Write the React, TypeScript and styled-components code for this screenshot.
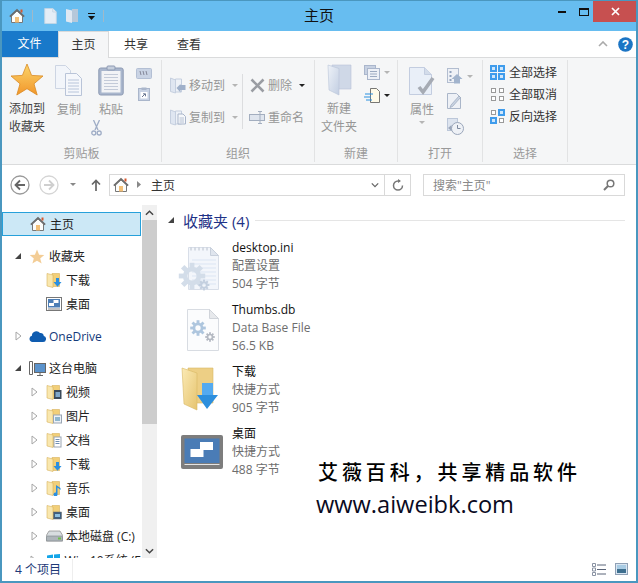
import React from "react";
import styled, { createGlobalStyle } from "styled-components";

const Global = createGlobalStyle`
  html, body { margin: 0; padding: 0; background: #fff; }
  body { font-family: "Open Sans", "Noto Sans CJK SC", "Liberation Sans", sans-serif; font-size: 12px; color: #222; }
  * { box-sizing: border-box; }
  svg { display: block; flex: none; }
`;

const Win = styled.div`
  position: relative; width: 638px; height: 583px; overflow: hidden; display: flex; flex-direction: column;
  background: #fff; border: 1px solid #4a97bf; border-left-width: 2px; border-right-width: 2px; border-bottom-width: 2px;
`;
const TitleBar = styled.div`
  height: 30px; flex: none; margin: 0 -2px 0 -2px; background: #67bdf0; display: flex; align-items: center; padding-left: 9px; position: relative;
`;
const QuickSep = styled.span`width: 1px; height: 12px; background: #9fb9c9; margin: 0 ${p => p.$m ?? 10}px 0 ${p => p.$l ?? 7}px;`;
const QuickGap = styled.span`width: ${p => p.$w}px; flex: none;`;
const Title = styled.div`position: absolute; left: 0; right: 0; top: 3px; text-align: center; font-size: 15px; line-height: 22px; color: #111;`;
const Controls = styled.div`margin-left: auto; display: flex; align-self: flex-start; height: 21px; position: relative;`;
const Ctl = styled.div`width: ${p => p.$w}px; display: flex; align-items: center; justify-content: center; background: ${p => p.$bg ?? "transparent"};`;

const TabBar = styled.div`height: 26px; flex: none; display: flex; margin-left: -1px; background: #fff; align-items: stretch; position: relative;`;
const FileTab = styled.div`width: 57px; background: #1979ca; color: #fff; font-size: 12px; line-height: 26px; text-align: center;`;
const Tab = styled.div`
  width: ${p => p.$w}px; text-align: center; line-height: 28px; font-size: 12px; color: #333;
  ${p => p.$on && "background:#f5f6f7; border:1px solid #d9dadb; border-bottom:none; height:27px; position:relative; z-index:1; line-height:26px;"}
`;
const TabRight = styled.div`margin-left: auto; display: flex; align-items: center; gap: 10px; padding-right: 3px;`;

const Ribbon = styled.div`height: 108px; flex: none; display: flex; background: #f5f6f7; border-top: 1px solid #dadbdc; border-bottom: 1px solid #dadbdc; margin-left: 0;`;
const Group = styled.div`
  width: ${p => p.$w}px; height: 102px; margin-top: 2px; flex: none; display: flex; flex-direction: column; border-right: 1px solid #e2e3e4;
`;
const GroupBody = styled.div`flex: 1; display: flex; padding-left: ${p => p.$pl ?? 0}px; min-height: 0;`;
const GroupLabel = styled.div`height: 20px; text-align: center; font-size: 12px; line-height: 24px; color: #9a9a9a;`;
const BigBtn = styled.div`width: ${p => p.$w}px; margin-left: ${p => p.$ml ?? 0}px; display: flex; flex-direction: column; align-items: center; padding-top: ${p => p.$pt ?? 5}px; color: ${p => p.$on ? "#444" : "#969696"}; line-height: 18px; text-align: center;`;
const BigLabel = styled.div`margin-top: ${p => p.$mt ?? 3}px; white-space: nowrap;`;
const ScissorSlot = styled.span`align-self: flex-start; margin: 1px 0 0 -2px;`;
const SmallCol = styled.div`display: flex; flex-direction: column; align-items: ${p => p.$a ?? "flex-start"}; gap: ${p => p.$g}px; margin-left: ${p => p.$ml ?? 0}px; padding-top: ${p => p.$pt ?? 0}px;`;
const MiniRow = styled.div`display: flex; align-items: center; gap: 4px;`;
const RowBtn = styled.div`display: flex; align-items: center; height: 18px; gap: ${p => p.$g ?? 3}px; color: ${p => p.$on ? "#333" : "#969696"}; white-space: nowrap;`;
const VDivider = styled.div`width: 1px; height: 55px; background: #dcdddf; margin: 14px 7px 0 ${p => p.$l}px;`;
const Caret = styled.span`
  display: inline-block; width: 0; height: 0; border-left: 3px solid transparent; border-right: 3px solid transparent;
  border-top: 3px solid ${p => p.$c ?? "#b5b5b5"}; margin-left: ${p => p.$ml ?? 4}px; margin-top: ${p => p.$mt ?? 0}px;
`;

const NavBar = styled.div`height: 40px; flex: none; display: flex; align-items: center; padding-left: 8px; padding-bottom: 1px;`;
const NavGap = styled.span`width: ${p => p.$w}px; flex: none;`;
const Addr = styled.div`
  width: 276px; height: 22px; margin-left: 8px; border: 1px solid #d9d9d9; display: flex; align-items: center; padding-left: 3px; color: #333;
`;
const AddrSep = styled.svg`margin: 0 10px 0 8px;`;
const AddrDrop = styled.span`margin-left: auto; margin-right: 5px;`;
const Refresh = styled.div`width: 26px; height: 22px; border: 1px solid #d9d9d9; border-left: none; display: flex; align-items: center; justify-content: center;`;
const Search = styled.div`
  width: 202px; height: 22px; margin-left: 12px; border: 1px solid #d9d9d9; display: flex; align-items: center; padding: 0 9px; color: #888; justify-content: space-between;
`;

const Main = styled.div`flex: 1; min-height: 0; display: flex;`;
const Side = styled.div`width: 155px; flex: none; position: relative; overflow: hidden; padding-top: 7px;`;
const NavRow = styled.div`
  height: 24px; width: 139px; display: flex; align-items: center; color: #222; white-space: nowrap; font-size: 12px;
  padding-left: ${p => p.$pl}px; margin-top: ${p => p.$gap ?? 0}px;
  ${p => p.$sel && "background:#cce8f6; border:1px solid #26a0da; padding-left:27px;"}
`;
const Arrow = styled.span`width: 12px; display: flex; justify-content: center; margin-right: ${p => p.$mr ?? 5}px;`;
const RowIcon = styled.span`width: 16px; margin-right: ${p => p.$mr ?? 4}px; display: flex; justify-content: center;`;
const LinkName = styled.span`color: #143a7a;`;
const Bar = styled.div`
  position: absolute; right: 0; top: 0; bottom: 0; width: 15px; background: #f0f0f0; display: flex; flex-direction: column; align-items: center;
`;
const BarEnd = styled.div`height: 15px; flex: none; display: flex; align-items: center; justify-content: center;`;
const Thumb = styled.div`width: 15px; height: 204px; background: #cdcdcd; flex: none;`;
const BarFill = styled.div`flex: 1;`;

const Content = styled.div`flex: 1; padding: 3px 0 0 10px; position: relative;`;
const GroupHead = styled.div`display: flex; align-items: center; height: 24px; font-size: 15px; color: #1e3287; margin-bottom: 7px;`;
const HeadTri = styled.span`margin-right: 8px;`;
const HeadRule = styled.div`flex: 1; height: 1px; background: #e5e5e5; margin: 0 11px 0 6px;`;
const Item = styled.div`display: flex; height: 62px; padding-left: 8px;`;
const ItemIcon = styled.div`width: 54px; height: 48px; margin: ${p => p.$mt ?? 7}px 3px 0 0; flex: none; display: flex; justify-content: center;`;
const ItemText = styled.div`line-height: 18px; color: #6d6d6d;`;
const ItemName = styled.div`color: #111;`;

const Status = styled.div`height: 23px; flex: none; display: flex; align-items: center; position: relative; background: #fff;`;
const StatusText = styled.div`width: 71px; padding-left: 13px; color: #1e3a78; font-size: 12px; border-right: 1px solid #eee; line-height: 22px;`;
const ViewBtns = styled.div`margin-left: auto; display: flex; gap: 9px; padding-right: 8px;`;

const Mark = styled.div`position: absolute; left: 314px; top: 457px; color: #000; pointer-events: none;`;
const MarkCn = styled.div`font-size: 20px; letter-spacing: 3.9px; line-height: 28px; font-family: "Noto Sans CJK SC", sans-serif; font-weight: 500; white-space: nowrap; margin-left: 2px;`;
const MarkEn = styled.div`font-size: 23.600px; line-height: 32px; font-family: "Open Sans", sans-serif; color: #0a0a1e; white-space: nowrap; margin-top: 2px;`;

const Home = ({ s = 16 }: { s?: number }) => (
  <svg width={s} height={s} viewBox="0 0 16 16">
    <path d="M2.5 8v6.5h11V8L8 3z" fill="#fdfdfb" stroke="#777" />
    <rect x="6" y="9" width="4" height="5.5" fill="#f3c078" />
    <path d="M.8 8.6 8 1.8l7.2 6.8" fill="none" stroke="#6a6a6a" strokeWidth="1.5" />
    <rect x="11.5" y="1.5" width="2" height="3" fill="#d8582f" />
  </svg>
);

const Doc = ({ w = 16, h = 18, lines = true, fill = "#fff", stroke = "#c6cedd" }: any) => (
  <svg width={w} height={h} viewBox="0 0 16 18">
    <path d="M1.5.5h9l4 4v13h-13z" fill={fill} stroke={stroke} />
    <path d="M10.5.5v4h4" fill="#e6ebf3" stroke={stroke} />
    {lines && <path d="M4 7h8M4 9.500h8M4 12h8M4 14.500h8" stroke="#b9c4d6" />}
  </svg>
);

const FolderSmall = ({ overlay }: { overlay?: React.ReactNode }) => (
  <svg width="16" height="16" viewBox="0 0 16 16">
    <path d="M6 1.500h7.500v13H6z" fill="#f2cf78" stroke="#d6b25c" strokeWidth=".6" />
    <path d="M1 1.500l6 1.500v12.500L1 14z" fill="#f9e7ae" stroke="#d6b25c" strokeWidth=".6" />
    {overlay}
  </svg>
);
const OvDown = <path d="M10 6h3v4h2.500l-4 4.800-4-4.800H10z" fill="#2a8fe0" />;
const OvVideo = <g><rect x="8" y="6" width="7.500" height="9" fill="#3a4a5a" /><rect x="9.500" y="8" width="4.500" height="5" fill="#7fa7c9" /></g>;
const OvPic = <g><rect x="7.500" y="7" width="8" height="8" fill="#eef2f7" stroke="#9aa5b3" /><rect x="9" y="9" width="5" height="4" fill="#8fb7cf" /></g>;
const OvDoc = <g><rect x="8" y="5" width="7" height="10" fill="#fff" stroke="#9aa5b3" /><path d="M9.500 7.500h4M9.500 9.500h4M9.500 11.500h4" stroke="#6f8fb5" /></g>;
const OvMusic = <path d="M10 5v7.500a2 2 0 1 0 1.500 1.800V7.500l3 2.500V8z" fill="#2a8fe0" />;
const OvDesk = <g><rect x="7.500" y="8" width="8" height="7" fill="#3f5f80" stroke="#666" strokeWidth=".5" /><rect x="9" y="10" width="5" height="3" fill="#8fc0e0" /></g>;

const DeskSmall = () => (
  <svg width="16" height="16" viewBox="0 0 16 16">
    <rect x=".5" y="1.500" width="15" height="13" fill="#fff" stroke="#777" />
    <rect x="2" y="3" width="12" height="8.500" fill="#4b7db5" />
    <rect x="7.500" y="4" width="5" height="3" fill="#fff" /><rect x="3" y="7" width="5" height="3" fill="#fff" />
    <rect x="2" y="12.500" width="12" height="1" fill="#888" />
  </svg>
);

const Tri = ({ open }: { open?: boolean }) => open ? (
  <svg width="8" height="8" viewBox="0 0 8 8"><path d="M7 1v6H1z" fill="#444" /></svg>
) : (
  <svg width="7" height="10" viewBox="0 0 7 10"><path d="M1 1l5 4-5 4z" fill="#fff" stroke="#a6a6a6" /></svg>
);

const Gear = ({ x, y, r, c = "#bfcfe2" }: any) => {
  const teeth = Array.from({ length: 8 }, (_, i) => i * 45);
  return (
    <g transform={`translate(${x} ${y})`}>
      {teeth.map(a => <rect key={a} x={-r * .22} y={-r * 1.2} width={r * .44} height={r * .5} fill={c} transform={`rotate(${a})`} />)}
      <circle r={r * .62} fill="none" stroke={c} strokeWidth={r * .42} />
    </g>
  );
};

const IniIcon = () => (
  <svg width="48" height="48" viewBox="0 0 48 48">
    <path d="M10.500 1.500h22l8 8v34h-30z" fill="#f3f6fb" stroke="#d8dee8" />
    <path d="M32.500 1.500v8h8z" fill="#dfe5ee" stroke="#c8d0dc" />
    <path d="M14 14h24M14 18h24M14 22h24M14 26h24M14 30h24M14 34h24M14 38h24" stroke="#dbe5f3" />
    <path d="M13 1.500v3M17 1.500v3M21 1.500v3M25 1.500v3M29 1.500v3" stroke="#b8c0cc" />
    <Gear x={14} y={30} r={11} c="#d3dde9" />
    <Gear x={26} y={39} r={4.500} c="#c3cfdf" />
  </svg>
);
const DbIcon = () => (
  <svg width="48" height="48" viewBox="0 0 48 48">
    <path d="M9.500 1.500h22l9 9v32h-31z" fill="#fbfcfd" stroke="#d8dce2" />
    <path d="M31.500 1.500v9h9z" fill="#e7e9ec" stroke="#d0d4da" />
    <Gear x={20} y={20} r={6.500} c="#aec6de" />
    <Gear x={32} y={29} r={4} c="#b4b9c2" />
  </svg>
);
const FolderBig = () => (
  <svg width="48" height="48" viewBox="0 0 48 48">
    <defs>
      <linearGradient id="fb" x1="0" y1="0" x2="1" y2="1"><stop offset="0" stopColor="#fbeab5" /><stop offset="1" stopColor="#e6c46f" /></linearGradient>
    </defs>
    <path d="M10 1h25v35H10z" fill="#edcf85" stroke="#d8b964" strokeWidth=".6" />
    <path d="M4 1l15 5v37L6 37z" fill="url(#fb)" stroke="#d8b964" strokeWidth=".6" />
    <path d="M24 16h11v12h5L29 42 19 28h5z" fill="#2d8fdd" />
    <path d="M24 16h11v12H24z" fill="#54aaf0" />
  </svg>
);
const DeskBig = () => (
  <svg width="42" height="34" viewBox="0 0 42 34">
    <rect width="42" height="34" rx="2" fill="#7d7d7d" />
    <rect x="3.500" y="3.500" width="35" height="24.500" fill="#4a7cb6" />
    <rect x="19" y="7" width="13" height="8" fill="#fff" /><rect x="9.500" y="14" width="13" height="8" fill="#fff" />
    <rect x="3.500" y="29" width="35" height=".8" fill="#fff" />
  </svg>
);

const Star = () => (
  <svg width="34" height="33" viewBox="0 0 34 33">
    <defs><linearGradient id="st" x1="0" y1="0" x2="0" y2="1"><stop offset="0" stopColor="#fbd56b" /><stop offset="1" stopColor="#f2962a" /></linearGradient></defs>
    <path d="M17 1l4.600 11.400L33 13l-9 7.800L27.200 32 17 25.700 6.800 32 10 20.800 1 13l11.400-.6z" fill="url(#st)" stroke="#d98a25" strokeWidth=".8" />
  </svg>
);
const Copy = () => (
  <svg width="28" height="31" viewBox="0 0 28 31">
    <path d="M.5.500h10l5 5v18H.5z" fill="#f2f5fa" stroke="#cdd5e3" />
    <path d="M10.500 8.500h11l5 5v17h-16z" fill="#f5f7fb" stroke="#b9c4d8" />
    <path d="M13 15h11M13 18h11M13 21h11M13 24h11M13 27h11" stroke="#b8c5da" />
  </svg>
);
const Paste = () => (
  <svg width="26" height="31" viewBox="0 0 26 31">
    <rect x=".8" y="3" width="24.400" height="27" rx="2" fill="#a9b6cd" stroke="#8d9ab3" />
    <rect x="3.500" y="6" width="19" height="21.500" fill="#f2f3f6" />
    <path d="M6 9.500h14M6 12.500h14M6 15.500h14M6 18.500h14M6 21.500h14M6 24.500h14" stroke="#c3cad8" />
    <rect x="9" y="1" width="8" height="4" rx="1" fill="#c6cfdd" stroke="#8d9ab3" />
  </svg>
);
const Scissors = () => (
  <svg width="11" height="16" viewBox="0 0 11 16" fill="none" stroke="#9fadc6" strokeWidth="1.300">
    <path d="M2.500 0l4.500 10M8.500 0L4 10" /><circle cx="2.800" cy="13" r="2" /><circle cx="8.200" cy="13" r="2" />
  </svg>
);
const Path1 = () => (
  <svg width="16" height="11" viewBox="0 0 16 11"><rect x=".5" y=".5" width="15" height="10" rx="1" fill="#c9d3e4" stroke="#b3bfd4" /><path d="M4 3l1 4M7 3l1 4M10 3l1 4" stroke="#667" strokeWidth=".7" /></svg>
);
const Shortcut = () => (
  <svg width="12" height="14" viewBox="0 0 12 14"><rect x=".5" y="1.500" width="11" height="12" fill="#c9d3e4" stroke="#aab6cb" /><rect x="3.500" y=".5" width="5" height="2.500" fill="#aab6cb" /><rect x="2.500" y="5" width="7" height="6.500" fill="#fff" /><path d="M4 10l3-3M5 6.800h2.500v2.500" stroke="#6b7893" fill="none" /></svg>
);
const MoveTo = ({ copy }: { copy?: boolean }) => (
  <svg width="16" height="17" viewBox="0 0 16 17">
    <path d="M.5 1l5 2v13l-5-1.500z" fill="#dfe6f1" stroke="#c5cfdf" />
    <path d="M5.500 2h6v13h-6z" fill="#edf1f7" stroke="#c5cfdf" />
    {copy ? <g><path d="M8 5h5l2.500 2.500V15H8z" fill="#f6f8fb" stroke="#a9b5ca" /><path d="M9.500 9h4.500M9.500 11h4.500M9.500 13h4.500" stroke="#b5c0d2" /></g>
      : <path d="M15.500 8v5h-5v2.500L6.500 11l4-4v1z" fill="#9fb0ca" />}
  </svg>
);
const XMark = () => (
  <svg width="15" height="15" viewBox="0 0 15 15"><path d="M1.500 1.500l12 12M13.500 1.500l-12 12" stroke="#9a9da3" strokeWidth="2.600" /></svg>
);
const RenameSvg = styled.svg`margin-left: -1px;`;
const Rename = () => (
  <RenameSvg width="16" height="13" viewBox="0 0 16 13" fill="none" stroke="#a3aebf"><rect x=".5" y="3.500" width="15" height="6" fill="#dfe5ee" /><path d="M9 .5h4M9 12.500h4M11 .5v12" /></RenameSvg>
);
const NewFolder = () => (
  <svg width="25" height="32" viewBox="0 0 25 32">
    <defs><linearGradient id="nf" x1="0" y1="0" x2="1" y2="1"><stop offset="0" stopColor="#eef2f8" /><stop offset="1" stopColor="#c2cee2" /></linearGradient></defs>
    <path d="M5 1h19v24H5z" fill="#cfd8e7" stroke="#b8c4d8" strokeWidth=".6" />
    <path d="M1 1l11 3.500V31L2 26z" fill="url(#nf)" stroke="#b8c4d8" strokeWidth=".6" />
  </svg>
);
const NewItem = () => (
  <svg width="16" height="15" viewBox="0 0 16 15"><rect x=".5" y=".5" width="11" height="9" fill="#c7d1e2" stroke="#aab6cc" /><rect x="3.500" y="3.500" width="12" height="11" fill="#eef1f7" stroke="#aab6cc" /><path d="M6 6.500h7M6 9h7M6 11.500h7" stroke="#9dabc2" /></svg>
);
const EasyAccess = () => (
  <svg width="17" height="15" viewBox="0 0 17 15"><path d="M6.500.5h6l3 3v11h-9z" fill="#fffbe9" stroke="#555" strokeWidth=".8" /><path d="M1 6h8M0 9h7M2 12h6" stroke="#2a8fe0" strokeWidth="1.200" /></svg>
);
const Props = () => (
  <svg width="27" height="29" viewBox="0 0 27 29">
    <path d="M.5.500h15l7 7v20H.5z" fill="#e9eff8" stroke="#c3cde0" />
    <path d="M15.500.500v7h7" fill="#d3dcea" stroke="#c3cde0" />
    <path d="M10 20l4 5 10-14" fill="none" stroke="#a6abb4" strokeWidth="3.600" />
  </svg>
);
const OpenArrow = () => (
  <svg width="16" height="16" viewBox="0 0 16 16"><rect x=".5" y=".5" width="11" height="14" fill="#eef1f6" stroke="#b2bdd0" /><path d="M2.500 3h2v2h-2zM2.500 7h2v2h-2zM2.500 11h2v2h-2z" fill="#93a4be" /><path d="M10 6l5.500 5H13v4.500H7V11H4.500z" fill="#a2b4cd" /></svg>
);
const Edit = () => (
  <svg width="15" height="16" viewBox="0 0 15 16"><path d="M.5.500h9l4 4v11H.5z" fill="#eef1f6" stroke="#aab6c9" /><path d="M4 12l8-9 1.500 1.500-8 9-2.500 1z" fill="#c9d3e2" stroke="#8f9db3" strokeWidth=".6" /></svg>
);
const History = () => (
  <svg width="17" height="17" viewBox="0 0 17 17"><rect x=".5" y=".5" width="10" height="12" fill="#dde4ef" stroke="#bcc7d9" /><circle cx="10.500" cy="10.500" r="6" fill="#eef1f6" stroke="#9aa6ba" /><path d="M10.500 7v3.500h3" fill="none" stroke="#7f8ba0" /><path d="M1 10l3.500-3v6z" fill="#9aa6ba" /></svg>
);
const Sel = ({ on }: { on: number[] }) => (
  <svg width="15" height="15" viewBox="0 0 15 15">
    {[[0, 0], [8, 0], [0, 8], [8, 8]].map(([x, y], i) => on.includes(i)
      ? <g key={i}><rect x={x} y={y} width="7" height="7" fill="#3f9cec" /><rect x={x + 2} y={y + 2} width="3" height="3" fill="#cfe6fb" /></g>
      : <rect key={i} x={x + 1.500} y={y + 1.500} width="4" height="4" fill="#fff" stroke="#9a9a9a" />)}
  </svg>
);
const NavCirc = ({ c, flip, a }: { c: string; flip?: boolean; a: string }) => (
  <svg width="20" height="20" viewBox="0 0 20 20" fill="none">
    <circle cx="10" cy="10" r="9" stroke={c} strokeWidth="1.300" />
    <g transform={flip ? "rotate(180 10 10)" : undefined} stroke={a} strokeWidth="1.800"><path d="M15 10H6M10 5.500L5.500 10l4.500 4.500" /></g>
  </svg>
);
const Cloud = () => (
  <svg width="17" height="12" viewBox="0 0 17 12"><path d="M3.500 12a3.200 3.200 0 0 1-.6-6.300A4.500 4.500 0 0 1 11 3a3.500 3.500 0 0 1 3.800 3.100A3 3 0 0 1 14 12z" fill="#0f5cb0" /></svg>
);
const PC = () => (
  <svg width="17" height="17" viewBox="0 0 17 17"><path d="M.5 1.500h3v13h-3z" fill="#fff" stroke="#666" /><rect x="5.500" y="3.500" width="11" height="9" fill="#5b93cc" stroke="#666" /><path d="M11 12.500v3M8 15.500h6" stroke="#666" /></svg>
);
const Drive = () => (
  <svg width="17" height="12" viewBox="0 0 17 12"><path d="M3 1h11l3 5v5H0V6z" fill="#d8dde0" stroke="#888" strokeWidth=".7" /><rect x=".5" y="6" width="16" height="5" rx="1" fill="#aeb5ba" stroke="#7c8489" strokeWidth=".6" /><rect x="12" y="7.500" width="3" height="2" fill="#6fc04a" /></svg>
);
const WinLogo = () => (
  <svg width="13" height="13" viewBox="0 0 13 13"><path d="M0 1.500l6-.9V6H0zM7 .5l6-.5v6H7zM0 7h6v5.400l-6-.9zM7 7h6v6l-6-.8z" fill="#14a5e8" /></svg>
);
const Chevron = ({ up, c = "#444", w = 10 }: any) => (
  <svg width={w} height="6" viewBox="0 0 10 6" fill="none"><path d={up ? "M1 5l4-4 4 4" : "M1 1l4 4 4-4"} stroke={c} strokeWidth="1.600" /></svg>
);

const Lbl = styled.span`display: inline-block;`;

const libs = [["视频", OvVideo], ["图片", OvPic], ["文档", OvDoc], ["下载", OvDown], ["音乐", OvMusic], ["桌面", OvDesk]] as const;

export default function App() {
  return (
    <Win>
      <Global />
      <TitleBar>
        <Home />
        <QuickSep />
        <Doc w={15} h={16} lines={false} fill="#e4edf6" stroke="#c4d5e4" />
        <QuickGap $w={7} />
        <svg width="14" height="16" viewBox="0 0 14 16"><path d="M1 1l6 1.500V15l-6-1.500z" fill="#dfe8f2" /><path d="M7 1h6v13H7z" fill="#b6c8da" /></svg>
        <QuickGap $w={9} />
        <svg width="7" height="7" viewBox="0 0 7 7"><path d="M0 0h7v1H0zM0 3h7L3.500 7z" fill="#111" /></svg>
        <QuickSep $l={8} $m={0} />
        <Title>主页</Title>
        <Controls>
          <Ctl $w={26}><svg width="8" height="2"><rect width="8" height="2" fill="#111" /></svg></Ctl>
          <Ctl $w={18}><svg width="10" height="8"><rect x=".5" y=".5" width="9" height="7" fill="none" stroke="#111" /><rect width="10" height="2" fill="#111" /></svg></Ctl>
          <Ctl $w={45} $bg="#c75050"><svg width="9" height="9" viewBox="0 0 9 9"><path d="M1 1l7 7M8 1l-7 7" stroke="#fff" strokeWidth="1.700" /></svg></Ctl>
        </Controls>
      </TitleBar>
      <TabBar>
        <FileTab>文件</FileTab>
        <Tab $on $w={51}>主页</Tab>
        <Tab $w={54}>共享</Tab>
        <Tab $w={52}>查看</Tab>
        <TabRight>
          <Chevron up c="#aaa" />
          <svg width="15" height="15" viewBox="0 0 15 15"><circle cx="7.500" cy="7.500" r="7.300" fill="#1c75c4" /><text x="7.500" y="12" textAnchor="middle" fontSize="12" fontWeight="700" fill="#fff" fontFamily="Liberation Sans">?</text></svg>
        </TabRight>
      </TabBar>
      <Ribbon>
        <Group $w={160}>
          <GroupBody $pl={7}>
            <BigBtn $w={36} $on $pt={3}><Star /><BigLabel $mt={4}>添加到<br />收藏夹</BigLabel></BigBtn>
            <BigBtn $w={36} $ml={6}><Copy /><BigLabel $mt={5}>复制</BigLabel></BigBtn>
            <BigBtn $w={36} $ml={6}><Paste /><BigLabel $mt={5}>粘贴</BigLabel><ScissorSlot><Scissors /></ScissorSlot></BigBtn>
            <SmallCol $g={8} $ml={7} $pt={8} $a="center"><Path1 /><Shortcut /></SmallCol>
          </GroupBody>
          <GroupLabel>剪贴板</GroupLabel>
        </Group>
        <Group $w={153}>
          <GroupBody $pl={8}>
            <SmallCol $g={14} $pt={16}>
              <RowBtn><MoveTo />移动到<Caret $ml={4} /></RowBtn>
              <RowBtn><MoveTo copy />复制到<Caret $ml={4} /></RowBtn>
            </SmallCol>
            <VDivider $l={4} />
            <SmallCol $g={14} $pt={16}>
              <RowBtn><XMark />删除<Caret $ml={4} $c="#222" /></RowBtn>
              <RowBtn><Rename /><Lbl>重命名</Lbl></RowBtn>
            </SmallCol>
          </GroupBody>
          <GroupLabel>组织</GroupLabel>
        </Group>
        <Group $w={83}>
          <GroupBody $pl={6}>
            <BigBtn $w={36} $pt={4}><NewFolder /><BigLabel $mt={4}>新建<br />文件夹</BigLabel></BigBtn>
            <SmallCol $g={8} $ml={7} $pt={5}>
              <MiniRow><NewItem /><Caret $ml={0} /></MiniRow>
              <MiniRow><EasyAccess /><Caret $ml={-1} $c="#222" /></MiniRow>
            </SmallCol>
          </GroupBody>
          <GroupLabel>新建</GroupLabel>
        </Group>
        <Group $w={85}>
          <GroupBody $pl={10}>
            <BigBtn $w={28} $pt={7}><Props /><BigLabel $mt={5}>属性</BigLabel><Caret $ml={0} $mt={2} /></BigBtn>
            <SmallCol $g={9} $ml={11} $pt={8}>
              <MiniRow><OpenArrow /><Caret $ml={0} /></MiniRow>
              <Edit />
              <History />
            </SmallCol>
          </GroupBody>
          <GroupLabel>打开</GroupLabel>
        </Group>
        <Group $w={85}>
          <GroupBody $pl={7}>
            <SmallCol $g={4} $pt={3}>
              <RowBtn $on $g={4}><Sel on={[0, 1, 2, 3]} />全部选择</RowBtn>
              <RowBtn $on $g={4}><Sel on={[]} />全部取消</RowBtn>
              <RowBtn $on $g={4}><Sel on={[1, 2]} />反向选择</RowBtn>
            </SmallCol>
          </GroupBody>
          <GroupLabel>选择</GroupLabel>
        </Group>
      </Ribbon>
      <NavBar>
        <NavCirc c="#9a9a9a" a="#666" />
        <NavGap $w={9} />
        <NavCirc c="#d5d5d5" a="#cfcfcf" flip />
        <NavGap $w={11} />
        <Caret $ml={0} $c="#888" />
        <NavGap $w={15} />
        <svg width="10" height="12" viewBox="0 0 10 12" fill="none" stroke="#666" strokeWidth="1.700"><path d="M5 12V2M1 5.500L5 1.500l4 4" /></svg>
        <Addr>
          <Home />
          <AddrSep width="4" height="7" viewBox="0 0 4 7"><path d="M0 0l4 3.500L0 7z" fill="#888" /></AddrSep>
          主页
          <AddrDrop><Chevron c="#666" w={8} /></AddrDrop>
        </Addr>
        <Refresh>
          <svg width="12" height="12" viewBox="0 0 12 12" fill="none" stroke="#777" strokeWidth="1.500"><path d="M10.500 6.500A4.500 4.500 0 1 1 6 2h2" /><path d="M6 0l3 2-3 2" fill="#777" stroke="none" /></svg>
        </Refresh>
        <Search>
          <span>搜索"主页"</span>
          <svg width="12" height="12" viewBox="0 0 12 12" fill="none" stroke="#777"><circle cx="7.500" cy="4.500" r="3.300" strokeWidth="1.500" /><path d="M5 7l-4 4" strokeWidth="2" /></svg>
        </Search>
      </NavBar>
      <Main>
        <Side>
          <NavRow $sel><RowIcon><Home /></RowIcon>主页</NavRow>
          <NavRow $pl={10} $gap={8}><Arrow><Tri open /></Arrow><RowIcon><svg width="16" height="15" viewBox="0 0 34 33"><path d="M17 1l4.600 11.400L33 13l-9 7.800L27.200 32 17 25.700 6.800 32 10 20.800 1 13l11.400-.6z" fill="#f3cd96" /></svg></RowIcon>收藏夹</NavRow>
          <NavRow $pl={44}><RowIcon><FolderSmall overlay={OvDown} /></RowIcon>下载</NavRow>
          <NavRow $pl={44}><RowIcon><DeskSmall /></RowIcon>桌面</NavRow>
          <NavRow $pl={10} $gap={8}><Arrow><Tri /></Arrow><RowIcon><Cloud /></RowIcon><LinkName>OneDrive</LinkName></NavRow>
          <NavRow $pl={10} $gap={8}><Arrow><Tri open /></Arrow><RowIcon><PC /></RowIcon>这台电脑</NavRow>
          {libs.map(([t, o]) => (
            <NavRow $pl={26} key={t}><Arrow $mr={6}><Tri /></Arrow><RowIcon><FolderSmall overlay={o} /></RowIcon>{t}</NavRow>
          ))}
          <NavRow $pl={26}><Arrow $mr={6}><Tri /></Arrow><RowIcon><Drive /></RowIcon>本地磁盘 (C:)</NavRow>
          <NavRow $pl={26}><Arrow $mr={6}><Tri /></Arrow><RowIcon><WinLogo /></RowIcon>Win-10系统 (E</NavRow>
          <Bar>
            <BarEnd><Chevron up w={9} /></BarEnd>
            <Thumb />
            <BarFill />
            <BarEnd><Chevron w={9} /></BarEnd>
          </Bar>
        </Side>
        <Content>
          <GroupHead>
            <HeadTri><Tri open /></HeadTri>
            <span>收藏夹 (4)</span>
            <HeadRule />
          </GroupHead>
          <Item>
            <ItemIcon><IniIcon /></ItemIcon>
            <ItemText><ItemName>desktop.ini</ItemName>配置设置<br />504 字节</ItemText>
          </Item>
          <Item>
            <ItemIcon><DbIcon /></ItemIcon>
            <ItemText><ItemName>Thumbs.db</ItemName>Data Base File<br />56.5 KB</ItemText>
          </Item>
          <Item>
            <ItemIcon $mt={4}><FolderBig /></ItemIcon>
            <ItemText><ItemName>下载</ItemName>快捷方式<br />905 字节</ItemText>
          </Item>
          <Item>
            <ItemIcon $mt={10}><DeskBig /></ItemIcon>
            <ItemText><ItemName>桌面</ItemName>快捷方式<br />488 字节</ItemText>
          </Item>
        </Content>
      </Main>
      <Status>
        <StatusText>4 个项目</StatusText>
        <ViewBtns>
          <svg width="14" height="13" viewBox="0 0 14 13"><path d="M.5.500h3v3h-3zM.5 5h3v3h-3zM.5 9.500h3v3h-3z" fill="#fff" stroke="#8a93a3" /><path d="M5 2h9M5 6.500h9M5 11h9" stroke="#5a6478" /></svg>
          <svg width="13" height="12" viewBox="0 0 13 12"><rect x=".5" y=".5" width="12" height="11" fill="#d9e6f2" stroke="#8fa0b5" /><rect x="2" y="2" width="9" height="4" fill="#a9cce4" /><rect x="2" y="6" width="9" height="4" fill="#3e6f8f" /></svg>
        </ViewBtns>
      </Status>
      <Mark>
        <MarkCn>艾薇百科，共享精品软件</MarkCn>
        <MarkEn>www.aiweibk.com</MarkEn>
      </Mark>
    </Win>
  );
}
